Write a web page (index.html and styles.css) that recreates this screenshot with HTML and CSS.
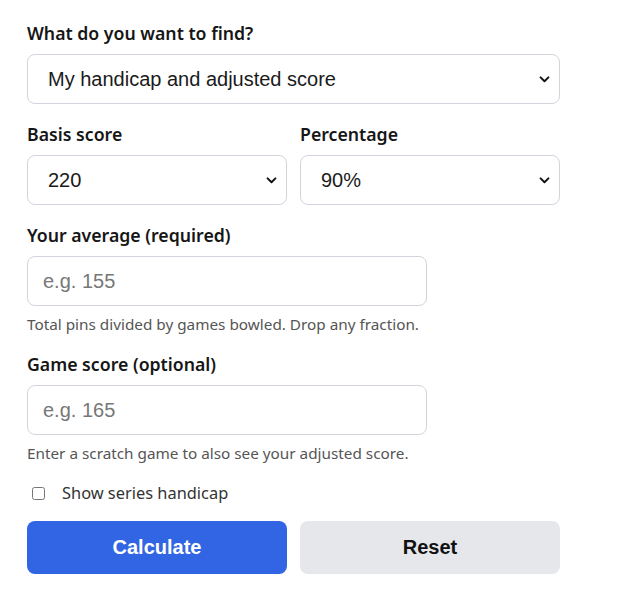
FILE: index.html
```html
<!DOCTYPE html>
<html lang="en">
<head>
    <meta charset="UTF-8">
    <meta name="viewport" content="width=device-width, initial-scale=1.0">
    <title>Bowling handicap calculator</title>
    <link rel="stylesheet" href="styles.css">
</head>

<body>
    <form class="calc">
        <div class="field">
            <label for="mode">What do you want to find?</label>
            <select id="mode">
                <option>My handicap and adjusted score</option>
            </select>
        </div>

        <div class="row">
            <div class="field">
                <label for="basis">Basis score</label>
                <select id="basis">
                    <option>220</option>
                </select>
            </div>
            <div class="field">
                <label for="pct">Percentage</label>
                <select id="pct">
                    <option>90%</option>
                </select>
            </div>
        </div>

        <div class="field">
            <label for="avg">Your average (required)</label>
            <input type="number" id="avg" class="short" placeholder="e.g. 155">
            <p class="hint">Total pins divided by games bowled. Drop any fraction.</p>
        </div>

        <div class="field">
            <label for="game">Game score (optional)</label>
            <input type="number" id="game" class="short" placeholder="e.g. 165">
            <p class="hint">Enter a scratch game to also see your adjusted score.</p>
        </div>

        <label class="check">
            <input type="checkbox" id="series">
            <span>Show series handicap</span>
        </label>

        <div class="row buttons">
            <button type="button" class="btn primary">Calculate</button>
            <button type="reset" class="btn secondary">Reset</button>
        </div>
    </form>
</body>
</html>
```

FILE: styles.css
```css
body {
    font-family: "Noto Sans", "Open Sans", sans-serif;
    background: white;
    color: #1a1a1a;
    margin: 0;
    padding: 22px 27px;
}

.calc {
    width: 533px;
}

.field {
    display: flex;
    flex-direction: column;
    margin-bottom: 19px;
}

label {
    font-size: 17.7px;
    font-weight: 600;
    line-height: 23px;
    margin-bottom: 9px;
    color: #161616;
}

select,
input[type="number"] {
    font-family: "Liberation Sans", Arial, sans-serif;
    font-size: 20px;
    color: #1a1a1a;
    height: 50px;
    border: 1px solid #d1d5db;
    border-radius: 8px;
    background: white;
    padding: 0 16px;
    box-sizing: border-box;
}

select {
    appearance: none;
    padding-left: 20px;
    background-image: url("data:image/svg+xml,%3Csvg xmlns='http://www.w3.org/2000/svg' width='12' height='8' viewBox='0 0 12 8'%3E%3Cpath d='M1.5 1.5 6 6l4.5-4.5' fill='none' stroke='%23111' stroke-width='2.2' stroke-linecap='round' stroke-linejoin='round'/%3E%3C/svg%3E");
    background-repeat: no-repeat;
    background-position: right 9px center;
    background-size: 11px 7px;
}

input.short {
    width: 400px;
    padding-left: 15px;
}

input::placeholder {
    color: #777;
}

.hint {
    font-size: 15.3px;
    line-height: 19px;
    color: #555;
    margin: 9px 0 0;
}

.row {
    display: grid;
    grid-template-columns: 1fr 1fr;
    gap: 13px;
}

.check {
    display: flex;
    align-items: center;
    gap: 17px;
    font-size: 16.4px;
    font-weight: 400;
    line-height: 22px;
    color: #333;
    margin: 0 0 17px 5px;
}

.check input {
    width: 13px;
    height: 13px;
    margin: 0;
}

.btn {
    font-family: "Liberation Sans", Arial, sans-serif;
    font-size: 20px;
    font-weight: bold;
    height: 53px;
    border: none;
    border-radius: 8px;
    cursor: pointer;
}

.primary {
    background: #3265e3;
    color: white;
}

.secondary {
    background: #e5e7eb;
    color: #111;
}
```
